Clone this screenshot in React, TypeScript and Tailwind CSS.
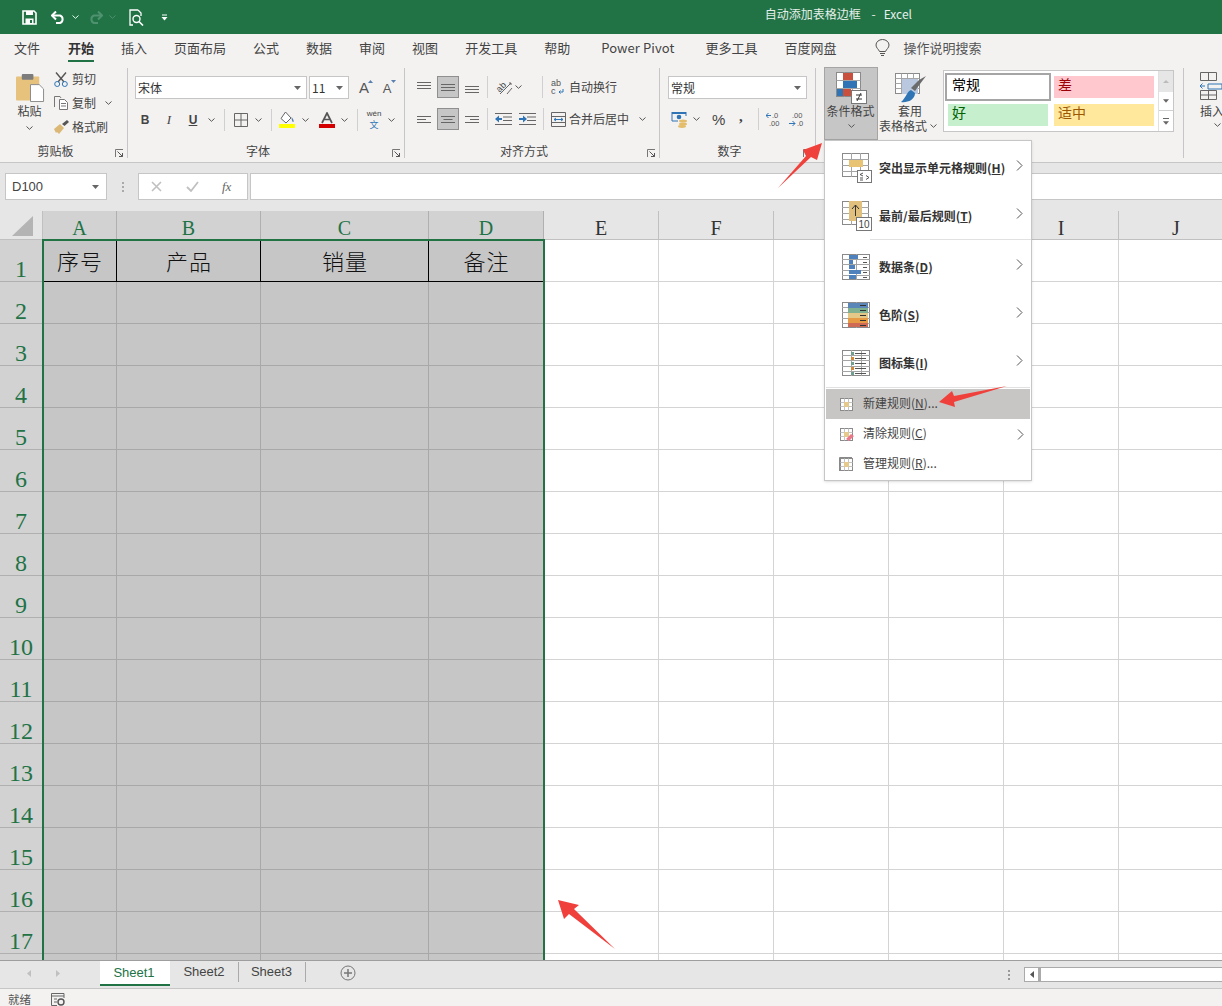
import React from 'react';

const cjk = "font-['Noto_Sans_CJK_SC','Liberation_Sans',sans-serif]";

const columns = [
  { name: 'A', width: 'w-[74px]', selected: true, title: '序号' },
  { name: 'B', width: 'w-[144px]', selected: true, title: '产品' },
  { name: 'C', width: 'w-[168px]', selected: true, title: '销量' },
  { name: 'D', width: 'w-[115px]', selected: true, title: '备注' },
  { name: 'E', width: 'w-[115px]', selected: false, title: '' },
  { name: 'F', width: 'w-[115px]', selected: false, title: '' },
  { name: 'G', width: 'w-[115px]', selected: false, title: '' },
  { name: 'H', width: 'w-[115px]', selected: false, title: '' },
  { name: 'I', width: 'w-[115px]', selected: false, title: '' },
  { name: 'J', width: 'w-[115px]', selected: false, title: '' },
];

const rows = Array.from({ length: 18 }, (_, i) => i + 1);

const tabs = ['文件', '开始', '插入', '页面布局', '公式', '数据', '审阅', '视图', '开发工具', '帮助'];

function Chev({ className = '', color = '#555' }: { className?: string; color?: string }) {
  return (
    <svg width="7" height="4" viewBox="0 0 7 4" className={`shrink-0 ${className}`}>
      <path d="M0.5 0.5 L3.5 3.3 L6.5 0.5" fill="none" stroke={color} strokeWidth="1" />
    </svg>
  );
}

function Tri({ className = '' }: { className?: string }) {
  return (
    <svg width="7" height="4" viewBox="0 0 7 4" className={`shrink-0 ${className}`}>
      <path d="M0 0 H7 L3.5 4 Z" fill="#666" />
    </svg>
  );
}

function Sep({ className = '' }: { className?: string }) {
  return <div className={`w-px h-[22px] bg-[#d0d0d0] shrink-0 ${className}`} />;
}

function Launcher() {
  return (
    <svg width="9" height="9" viewBox="0 0 9 9" className="shrink-0 mr-[3px] mt-[6px]">
      <path d="M0.5 8 V0.5 H8" fill="none" stroke="#777" />
      <path d="M2.5 2.5 L7.5 7.5 M7.5 4 V7.5 H4" fill="none" stroke="#555" />
    </svg>
  );
}

function Group({ width, label, launcher, children }: { width: string; label: string; launcher?: boolean; children: React.ReactNode }) {
  return (
    <div className={`${width} h-[90px] shrink-0 flex flex-col border-r border-[#c6c6c6]`}>
      <div className="h-[75px] shrink-0">{children}</div>
      <div className="flex items-center h-[15px]">
        <span className="flex-1 pr-[4px] text-center text-[12px] leading-[15px] text-[#444]">{label}</span>
        {launcher ? <Launcher /> : <span className="w-[12px]" />}
      </div>
    </div>
  );
}

function Lines({ pos, align }: { pos: 'top' | 'mid' | 'bottom'; align: 'left' | 'center' | 'right' | 'full' }) {
  const y = pos === 'top' ? [2, 5, 8] : pos === 'mid' ? [4, 7, 10] : [6, 9, 12];
  const seg = (i: number) => {
    if (align === 'full') return 'M0 ' + (y[i] + 0.5) + ' H14';
    const w = i === 1 ? 9 : 14;
    if (align === 'left') return `M0 ${y[i] + 0.5} H${w}`;
    if (align === 'right') return `M${14 - w} ${y[i] + 0.5} H14`;
    return `M${(14 - w) / 2} ${y[i] + 0.5} H${14 - (14 - w) / 2}`;
  };
  return (
    <svg width="14" height="14" viewBox="0 0 14 14">
      <path d={seg(0) + seg(1) + seg(2)} stroke="#666" fill="none" />
    </svg>
  );
}

function AlignBtn({ active, children }: { active?: boolean; children: React.ReactNode }) {
  return (
    <div className={`w-[22px] h-[22px] flex items-center justify-center shrink-0 ${active ? 'bg-[#c6c6c6] border border-[#8f8f8f]' : ''}`}>
      {children}
    </div>
  );
}

function Indent({ flip }: { flip?: boolean }) {
  return (
    <svg width="17" height="14" viewBox="0 0 17 14" className="shrink-0">
      <path d="M0 1.5 H17 M8 5 H17 M8 8.5 H17 M0 12.5 H17" stroke="#666" />
      {flip ? (
        <path d="M0 6 H4 V3.5 L8 7 L4 10.5 V8 H0 Z" fill="#2f75b5" />
      ) : (
        <path d="M7 6 H4 V3.5 L0 7 L4 10.5 V8 H7 Z" fill="#2f75b5" />
      )}
    </svg>
  );
}

function GridBase({ w = 28, h = 26, cols = 3, rowsN = 5 }: { w?: number; h?: number; cols?: number; rowsN?: number }) {
  const parts: React.ReactNode[] = [];
  for (let i = 1; i < cols; i++) {
    const x = Math.round((w * i) / cols) + 0.5;
    parts.push(<path key={`c${i}`} d={`M${x} 0 V${h}`} stroke="#a5a5a5" />);
  }
  for (let i = 1; i < rowsN; i++) {
    const y = Math.round((h * i) / rowsN) + 0.5;
    parts.push(<path key={`r${i}`} d={`M0 ${y} H${w}`} stroke="#a5a5a5" />);
  }
  return (
    <>
      <rect x="0.5" y="0.5" width={w - 1} height={h - 1} fill="#fff" stroke="#8a8a8a" />
      {parts}
    </>
  );
}

function HighlightIcon() {
  return (
    <svg width="30" height="30" viewBox="0 0 30 30" className="shrink-0">
      <GridBase w={27} h={24} rowsN={4} />
      <rect x="7" y="7" width="14" height="7" fill="#e8c374" />
      <rect x="15.5" y="17.5" width="14" height="12" fill="#fff" stroke="#777" />
      <path d="M21 20 L18 21.5 L21 23 M18 25 H21 M18 27 H21 M24 22.5 L27 24.5 L24 26.5" stroke="#444" fill="none" strokeWidth="0.9" />
    </svg>
  );
}

function TopIcon() {
  return (
    <svg width="30" height="30" viewBox="0 0 30 30" className="shrink-0">
      <GridBase w={27} h={24} rowsN={4} />
      <rect x="7" y="0" width="13" height="20" fill="#e0c07c" />
      <path d="M13.5 15 V4 M10 8 L13.5 4 L17 8" fill="none" stroke="#333" />
      <rect x="14.5" y="16.5" width="15" height="13" fill="#fff" stroke="#777" />
      <text x="22" y="27" textAnchor="middle" fontSize="10" fill="#444" fontFamily="Liberation Sans">10</text>
    </svg>
  );
}

function DataBarIcon() {
  return (
    <svg width="28" height="26" viewBox="0 0 28 26" className="shrink-0">
      <GridBase cols={2} />
      <rect x="7" y="1" width="9" height="4" fill="#4f81bd" />
      <rect x="7" y="6" width="4" height="4" fill="#4f81bd" />
      <rect x="7" y="11" width="6" height="4" fill="#4f81bd" />
      <rect x="7" y="16" width="12" height="4" fill="#4f81bd" />
      <rect x="7" y="21" width="7" height="4" fill="#4f81bd" />
      <path d="M21 3.5 H25 M21 8.5 H25 M21 13.5 H25 M21 18.5 H25 M21 23.5 H25" stroke="#555" />
    </svg>
  );
}

function ScaleIcon() {
  return (
    <svg width="28" height="26" viewBox="0 0 28 26" className="shrink-0">
      <GridBase cols={2} />
      <rect x="6" y="1" width="20" height="5" fill="#5b87b8" />
      <rect x="6" y="6" width="20" height="5" fill="#7fb08f" />
      <rect x="6" y="11" width="20" height="5" fill="#e3c888" />
      <rect x="6" y="16" width="20" height="5" fill="#e59a43" />
      <rect x="6" y="21" width="20" height="4" fill="#cf6a55" />
      <path d="M18 3.5 H24 M18 8.5 H24 M18 13.5 H24 M18 18.5 H24 M18 23.5 H24" stroke="#333" />
    </svg>
  );
}

function IconSetIcon() {
  return (
    <svg width="28" height="26" viewBox="0 0 28 26" className="shrink-0">
      <GridBase cols={3} />
      <path d="M13 3.5 H24 M13 8.5 H24 M13 13.5 H24 M13 18.5 H24 M13 23.5 H24" stroke="#555" />
      <rect x="9" y="2" width="3" height="3" fill="#6f9f8f" />
      <rect x="9" y="7" width="3" height="3" fill="#d08a3a" />
      <rect x="9" y="12" width="3" height="3" fill="#6f9f8f" />
      <rect x="9" y="17" width="3" height="3" fill="#d08a3a" />
      <rect x="9" y="22" width="3" height="3" fill="#6f9f8f" />
    </svg>
  );
}

function SmallRuleIcon({ kind }: { kind: 'new' | 'clear' | 'manage' }) {
  return (
    <svg width="16" height="16" viewBox="0 0 16 16" className="shrink-0">
      {kind === 'manage' && <path d="M1.5 15 V1.5 H14" fill="none" stroke="#888" />}
      <rect x="2.5" y="2.5" width="12" height="12" fill="#fff" stroke="#8a8a8a" />
      <path d="M6.5 2.5 V14.5 M10.5 2.5 V14.5 M2.5 6.5 H14.5 M2.5 10.5 H14.5" stroke="#c4c4c4" />
      <rect x="6" y="6" width="5" height="5" fill="#e6c98c" />
      {kind === 'clear' && <path d="M8 13 L13 8 L16 10 L11 15 Z" fill="#e9788a" />}
    </svg>
  );
}

function ArrowRight({ className = '' }: { className?: string }) {
  return (
    <svg width="7" height="11" viewBox="0 0 7 11" className={`shrink-0 ${className}`}>
      <path d="M1 0.5 L6 5.5 L1 10.5" fill="none" stroke="#555" />
    </svg>
  );
}

function MenuItem({ icon, label, letter, arrow = true }: { icon: React.ReactNode; label: string; letter: string; arrow?: boolean }) {
  return (
    <div className="h-[48px] flex items-center pl-[17px] pr-[8px]">
      <div className="w-[30px] shrink-0 flex">{icon}</div>
      <span className="ml-[7px] text-[12px] font-bold text-[#333] whitespace-nowrap">
        {label}(<span className="underline">{letter}</span>)
      </span>
      {arrow && <ArrowRight className="ml-auto -mt-[6px]" />}
    </div>
  );
}

function SmallItem({ kind, label, letter, dots, arrow, active }: { kind: 'new' | 'clear' | 'manage'; label: string; letter: string; dots?: boolean; arrow?: boolean; active?: boolean }) {
  return (
    <div className={`h-[30px] mx-px flex items-center pl-[12px] pr-[6px] ${active ? 'bg-[#c8c6c4]' : ''}`}>
      <SmallRuleIcon kind={kind} />
      <span className="ml-[9px] -mt-[2px] text-[12px] text-[#444] whitespace-nowrap">
        {label}(<span className="underline">{letter}</span>){dots ? '...' : ''}
      </span>
      {arrow && <ArrowRight className="ml-auto" />}
    </div>
  );
}

function TitleBar() {
  return (
    <div className="h-[34px] shrink-0 bg-[#217346] flex items-center justify-between">
      <div className="flex items-center pl-[22px]">
        <svg width="15" height="15" viewBox="0 0 15 15" className="shrink-0">
          <path d="M1 1 H12 L14 3 V14 H1 Z" fill="none" stroke="#fff" strokeWidth="1.6" />
          <rect x="4" y="1" width="7" height="4" fill="#fff" />
          <rect x="3.5" y="8.5" width="8" height="5.5" fill="#fff" />
          <rect x="8" y="10" width="2" height="3" fill="#217346" />
        </svg>
        <svg width="15" height="13" viewBox="0 0 15 13" className="ml-[14px] shrink-0">
          <path d="M1 4.5 H9 A4 4 0 0 1 9 12 H5" fill="none" stroke="#fff" strokeWidth="2" />
          <path d="M5 0.5 L1 4.5 L5 8.5" fill="none" stroke="#fff" strokeWidth="2" />
        </svg>
        <Chev className="ml-[6px]" color="#dfe" />
        <svg width="15" height="13" viewBox="0 0 15 13" className="ml-[9px] shrink-0">
          <path d="M14 4.5 H6 A4 4 0 0 0 6 12 H10" fill="none" stroke="#4f9270" strokeWidth="2" />
          <path d="M10 0.5 L14 4.5 L10 8.5" fill="none" stroke="#4f9270" strokeWidth="2" />
        </svg>
        <Chev className="ml-[6px]" color="#4f9270" />
        <svg width="15" height="17" viewBox="0 0 15 17" className="ml-[13px] shrink-0">
          <path d="M9 1 H1 V16 H4 M9 1 L12 4 V7" fill="none" stroke="#fff" strokeWidth="1.3" />
          <circle cx="7.5" cy="10" r="3.5" fill="none" stroke="#fff" strokeWidth="1.4" />
          <path d="M10 12.5 L14 16.5" stroke="#fff" strokeWidth="1.6" />
        </svg>
        <svg width="7" height="7" viewBox="0 0 7 7" className="ml-[17px] shrink-0">
          <path d="M1 1 H6" stroke="#fff" />
          <path d="M0.5 3 H6.5 L3.5 6.5 Z" fill="#fff" />
        </svg>
      </div>
      <div className="mr-[310px] mb-[6px] text-[12px] text-[#e6efe9] whitespace-pre">自动添加表格边框    -   Excel</div>
    </div>
  );
}

function TabBar() {
  return (
    <div className="h-[28px] shrink-0 flex items-center pl-[14px] text-[13px] text-[#444] bg-[#f3f2f1] whitespace-nowrap">
      <div className="flex gap-[27px]">
        {tabs.map((tab) => (
          <div key={tab} className={`relative h-[28px] leading-[28px] ${tab === '开始' ? 'ml-px font-bold text-[#333]' : ''}`}>
            {tab}
            {tab === '开始' && <div className="absolute left-0 right-0 bottom-0 h-[2px] bg-[#217346]" />}
          </div>
        ))}
      </div>
      <div className="ml-[31px] tracking-[0.1px]">Power Pivot</div>
      <div className="ml-[31px]">更多工具</div>
      <div className="ml-[27px]">百度网盘</div>
      <svg width="15" height="18" viewBox="0 0 15 18" className="ml-[38px] shrink-0">
        <path d="M4.5 12.5 C3.5 10 1 9 1 6 A6.5 5.5 0 0 1 14 6 C14 9 11.5 10 10.5 12.5 Z" fill="none" stroke="#555" />
        <path d="M5 14.5 H10 M6 16.5 H9" stroke="#555" />
      </svg>
      <div className="ml-[14px] text-[#555]">操作说明搜索</div>
    </div>
  );
}

function ClipboardGroup() {
  return (
    <Group width="w-[128px]" label="剪贴板" launcher>
      <div className="flex h-full">
        <div className="w-[50px] pl-[9px] flex flex-col items-center pt-[4px] shrink-0">
          <svg width="29" height="31" viewBox="0 0 30 31" className="shrink-0 ml-[2px]">
            <rect x="0" y="4" width="24" height="25" rx="1" fill="#e6c27d" />
            <rect x="6" y="1.5" width="12" height="6" rx="1" fill="#7c7c7c" />
            <path d="M15 12.5 H24 L28.5 17 V30 H15 Z" fill="#fff" stroke="#8a8a8a" />
          </svg>
          <span className="text-[12px] leading-[16px] text-[#444]">粘贴</span>
          <Chev className="mt-[7px]" />
        </div>
        <div className="pl-[4px] flex flex-col text-[12px] text-[#444]">
          <div className="flex items-center h-[24px] mt-[-1px]">
            <svg width="14" height="15" viewBox="0 0 14 15" className="shrink-0">
              <path d="M2 0.5 L10 10 M12 0.5 L4 10" stroke="#555" strokeWidth="1.4" />
              <circle cx="3.2" cy="12" r="2.5" fill="none" stroke="#2f75b5" />
              <circle cx="10.8" cy="12" r="2.5" fill="none" stroke="#2f75b5" />
            </svg>
            <span className="ml-[4px]">剪切</span>
          </div>
          <div className="flex items-center h-[24px]">
            <svg width="14" height="14" viewBox="0 0 14 14" className="shrink-0">
              <path d="M0.5 11 V0.5 H6 L7 2" fill="none" stroke="#777" />
              <path d="M5.5 3.5 H10.5 L13.5 6.5 V13.5 H5.5 Z M7 7.5 H12 M7 10 H12" fill="#fff" stroke="#777" />
            </svg>
            <span className="ml-[4px]">复制</span>
            <Chev className="ml-[9px]" />
          </div>
          <div className="flex items-center h-[24px]">
            <svg width="15" height="14" viewBox="0 0 15 14" className="shrink-0">
              <path d="M0 9 L6 4 L10 8 L5 14 L3 12 L2 13 Z" fill="#dcb877" />
              <path d="M8 4 L13 0 L15 2 L10.5 6 Z" fill="#555" />
            </svg>
            <span className="ml-[3px]">格式刷</span>
          </div>
        </div>
      </div>
    </Group>
  );
}

function FontGroup() {
  return (
    <Group width="w-[277px]" label="字体" launcher>
      <div className="flex items-center h-[23px] mt-[8px] pl-[7px] text-[12px] text-[#333]">
        <div className="w-[172px] h-[23px] bg-white border border-[#c6c6c6] flex items-center pl-[2px] pr-[5px]">
          <span className="flex-1">宋体</span>
          <Tri />
        </div>
        <div className="w-[40px] h-[23px] ml-[2px] bg-white border border-[#c6c6c6] flex items-center pl-[2px] pr-[5px]">
          <span className="flex-1">11</span>
          <Tri />
        </div>
        <div className="relative ml-[8px] w-[14px] text-center text-[15px] leading-none text-[#555] font-['Liberation_Sans',sans-serif]">
          A
          <svg width="5" height="3" viewBox="0 0 5 3" className="absolute -right-[2px] top-0">
            <path d="M0 3 L2.5 0 L5 3 Z" fill="#5b7fb0" />
          </svg>
        </div>
        <div className="relative ml-[10px] w-[12px] text-center text-[13px] leading-none text-[#555] mt-[2px] font-['Liberation_Sans',sans-serif]">
          A
          <svg width="5" height="3" viewBox="0 0 5 3" className="absolute -right-[3px] -top-[2px]">
            <path d="M0 0 H5 L2.5 3 Z" fill="#5b7fb0" />
          </svg>
        </div>
      </div>
      <div className="flex items-center h-[22px] mt-[10px] text-[12px] text-[#444] font-['Liberation_Sans',sans-serif]">
        <span className="w-[16px] ml-[9px] text-center font-bold">B</span>
        <span className="w-[16px] ml-[8px] text-center italic font-['Liberation_Serif',serif] text-[13px]">I</span>
        <span className="w-[16px] ml-[8px] text-center font-bold underline">U</span>
        <Chev className="ml-[7px]" />
        <Sep className="ml-[9px]" />
        <svg width="14" height="14" viewBox="0 0 14 14" className="ml-[9px] shrink-0">
          <path d="M0.5 0.5 H13.5 V13.5 H0.5 Z M7 0.5 V13.5 M0.5 7 H13.5" fill="none" stroke="#666" />
        </svg>
        <Chev className="ml-[7px]" />
        <Sep className="ml-[9px]" />
        <svg width="17" height="18" viewBox="0 0 17 18" className="ml-[7px] shrink-0">
          <path d="M6.5 1 L12 7 L7 12 L2 7.5 Z" fill="#fff" stroke="#666" />
          <path d="M12.5 6 C14 8 15 9 14.5 11 C13.5 11.5 12.5 9 12.5 6 Z" fill="#5b7fb0" />
          <rect x="0" y="13" width="16" height="4" fill="#ffff00" />
        </svg>
        <Chev className="ml-[6px]" />
        <svg width="16" height="16" viewBox="0 0 16 16" className="ml-[10px] shrink-0">
          <path d="M3 11 L8 1 L13 11 M5 7.5 H11" fill="none" stroke="#555" strokeWidth="1.7" />
          <rect x="0" y="12" width="16" height="4" fill="#d40000" />
        </svg>
        <Chev className="ml-[6px]" />
        <Sep className="ml-[9px]" />
        <div className="ml-[8px] w-[16px] flex flex-col items-center gap-[2px] -mt-[2px]">
          <span className="text-[8px] leading-[8px]">wén</span>
          <span className={`text-[9px] leading-[9px] text-[#2f75b5] ${cjk}`}>文</span>
        </div>
        <Chev className="ml-[6px]" />
      </div>
    </Group>
  );
}

function AlignGroup() {
  return (
    <Group width="w-[255px]" label="对齐方式" launcher>
      <div className="flex items-center h-[22px] mt-[8px] pl-[8px] text-[12px] text-[#444]">
        <div className="flex gap-[2px]">
          <AlignBtn><Lines pos="top" align="full" /></AlignBtn>
          <AlignBtn active><Lines pos="mid" align="full" /></AlignBtn>
          <AlignBtn><Lines pos="bottom" align="full" /></AlignBtn>
        </div>
        <Sep className="ml-[4px]" />
        <svg width="18" height="16" viewBox="0 0 18 16" className="ml-[7px] shrink-0 overflow-visible">
          <text x="1" y="11" fontSize="9" fill="#444" transform="rotate(-45 6 8)" fontFamily="Liberation Sans">ab</text>
          <path d="M5 15 L16 4 M12 15 L17 9 M14 4 H16 V6" stroke="#666" fill="none" />
        </svg>
        <Chev className="ml-[2px]" />
        <Sep className="ml-[20px]" />
        <svg width="14" height="16" viewBox="0 0 14 16" className="ml-[8px] shrink-0">
          <text x="0" y="7" fontSize="9" fill="#555" fontFamily="Liberation Sans">ab</text>
          <text x="0" y="15" fontSize="9" fill="#555" fontFamily="Liberation Sans">c</text>
          <path d="M12 10 V13 H8 M9.5 11.5 L8 13 L9.5 14.5" fill="none" stroke="#2f75b5" />
        </svg>
        <span className="ml-[4px] whitespace-nowrap">自动换行</span>
      </div>
      <div className="flex items-center h-[22px] mt-[10px] pl-[8px] text-[12px] text-[#444]">
        <div className="flex gap-[2px]">
          <AlignBtn><Lines pos="mid" align="left" /></AlignBtn>
          <AlignBtn active><Lines pos="mid" align="center" /></AlignBtn>
          <AlignBtn><Lines pos="mid" align="right" /></AlignBtn>
        </div>
        <Sep className="ml-[4px]" />
        <div className="ml-[7px] shrink-0 flex"><Indent /></div>
        <div className="ml-[7px] shrink-0 flex"><Indent flip /></div>
        <Sep className="ml-[7px]" />
        <svg width="15" height="15" viewBox="0 0 15 15" className="ml-[7px] shrink-0">
          <path d="M0.5 0.5 H14.5 V14.5 H0.5 Z M0.5 4.5 H14.5 M0.5 10.5 H14.5" fill="none" stroke="#666" />
          <path d="M3 7.5 H12 M3 7.5 L5 6 M3 7.5 L5 9 M12 7.5 L10 6 M12 7.5 L10 9" fill="none" stroke="#2f75b5" />
        </svg>
        <span className="ml-[3px] whitespace-nowrap">合并后居中</span>
        <Chev className="ml-[10px]" />
      </div>
    </Group>
  );
}

function NumberGroup() {
  return (
    <Group width="w-[156px]" label="数字" launcher>
      <div className="w-[139px] h-[23px] mt-[8px] ml-[8px] bg-white border border-[#c6c6c6] flex items-center pl-[2px] pr-[5px] text-[12px] text-[#333]">
        <span className="flex-1">常规</span>
        <Tri />
      </div>
      <div className="flex items-center h-[22px] mt-[9px] text-[#444]">
        <svg width="17" height="17" viewBox="0 0 17 17" className="ml-[11px] shrink-0">
          <path d="M1 1 H15 V3 H1 Z" fill="#2f75b5" />
          <path d="M1 1 V10 H7 M15 1 V5" fill="none" stroke="#2f75b5" />
          <circle cx="8" cy="6" r="2.3" fill="#2f75b5" />
          <ellipse cx="12" cy="10" rx="4" ry="1.5" fill="#e3bd6c" />
          <ellipse cx="12" cy="13" rx="4" ry="1.5" fill="#e3bd6c" />
          <ellipse cx="11" cy="15.5" rx="4" ry="1.4" fill="#e3bd6c" />
        </svg>
        <Chev className="ml-[5px]" />
        <span className="ml-[12px] w-[14px] text-[15px] leading-none font-['Liberation_Sans',sans-serif]">%</span>
        <span className="ml-[13px] w-[6px] text-[15px] leading-none font-bold font-['Liberation_Serif',serif] -mt-[5px]">,</span>
        <Sep className="ml-[13px]" />
        <svg width="16" height="16" viewBox="0 0 16 16" className="ml-[7px] shrink-0">
          <text x="6" y="7" fontSize="7.5" fill="#555" fontFamily="Liberation Sans">.0</text>
          <text x="3" y="15" fontSize="7.5" fill="#555" fontFamily="Liberation Sans">.00</text>
          <path d="M0 4.5 H5 M2.5 2 L0 4.5 L2.5 7" fill="none" stroke="#2f75b5" />
        </svg>
        <svg width="16" height="16" viewBox="0 0 16 16" className="ml-[7px] shrink-0">
          <text x="3" y="7" fontSize="7.5" fill="#555" fontFamily="Liberation Sans">.00</text>
          <text x="8" y="15" fontSize="7.5" fill="#555" fontFamily="Liberation Sans">.0</text>
          <path d="M0 12.5 H6 M3.5 10 L6 12.5 L3.5 15" fill="none" stroke="#2f75b5" />
        </svg>
      </div>
    </Group>
  );
}

function StylesGroup() {
  return (
    <Group width="w-[368px]" label="样式">
      <div className="flex items-start pl-[8px] text-[12px] text-[#444]">
        <div className="w-[54px] h-[73px] -mt-[1px] bg-[#c6c6c6] border border-[#a5a5a5] flex flex-col items-center pt-[4px] shrink-0">
          <svg width="31" height="33" viewBox="0 0 31 33" className="shrink-0">
            <rect x="0.5" y="0.5" width="24" height="24" fill="#fff" stroke="#8a8a8a" />
            <path d="M8.5 0.5 V24.5 M16.5 0.5 V24.5 M0.5 8.5 H24.5 M0.5 16.5 H24.5" stroke="#a5a5a5" />
            <rect x="7" y="1" width="10" height="7" fill="#c9503c" />
            <rect x="7" y="9" width="14" height="7" fill="#2f75b5" />
            <rect x="7" y="17" width="8" height="7" fill="#c9503c" />
            <rect x="1" y="17" width="6" height="7" fill="#2f75b5" />
            <rect x="15.5" y="18.5" width="15" height="13" fill="#fff" stroke="#777" />
            <path d="M20 23 H26 M20 27 H26 M25 21 L21 29" stroke="#333" fill="none" />
          </svg>
          <span className="leading-[15px] -mt-[2px] -ml-px whitespace-nowrap">条件格式</span>
          <Chev className="mt-[6px]" />
        </div>
        <div className="w-[64px] flex flex-col items-center pt-[5px] shrink-0">
          <svg width="31" height="31" viewBox="0 0 31 31" className="shrink-0">
            <rect x="0.5" y="0.5" width="24" height="20" fill="#fff" stroke="#8a8a8a" />
            <path d="M6.5 0.5 V20.5 M12.5 0.5 V20.5 M18.5 0.5 V20.5 M0.5 5.5 H24.5 M0.5 10.5 H24.5 M0.5 15.5 H24.5" stroke="#a5a5a5" />
            <rect x="7" y="6" width="16" height="15" fill="#b9c8de" />
            <path d="M31 3 L25 11 L20 18 L16 15 L24 7 Z" fill="#6b6b6b" />
            <path d="M16 17 C12 18 11 25 6 29 C12 30 20 27 20 20 Z" fill="#2f75b5" />
          </svg>
          <span className="leading-[15px] -mt-[1px]">套用</span>
          <span className="leading-[15px] flex items-center whitespace-nowrap -ml-[4px]">
            表格格式
            <Chev className="ml-[3px]" />
          </span>
        </div>
        <div className="ml-[1px] mt-[2px] w-[231px] h-[62px] bg-white border border-[#c6c6c6] flex shrink-0">
          <div className="w-[214px] grid grid-cols-[100px_100px] gap-x-[6px] gap-y-[6px] pl-[4px] pt-[5px] content-start text-[14px] leading-[17px]">
            <div className="h-[22px] pl-[4px] bg-white text-black outline-2 outline-offset-1 outline-[#a5a5a5]">常规</div>
            <div className="h-[22px] pl-[4px] bg-[#ffc7ce] text-[#9c0006]">差</div>
            <div className="h-[22px] pl-[4px] bg-[#c6efce] text-[#006100]">好</div>
            <div className="h-[22px] pl-[4px] bg-[#ffe79b] text-[#9c5700]">适中</div>
          </div>
          <div className="w-[15px] flex flex-col border-l border-[#e0e0e0]">
            <div className="h-[21px] bg-[#e6e6e6] flex items-center justify-center">
              <svg width="6" height="3" viewBox="0 0 6 3"><path d="M0 3 L3 0 L6 3 Z" fill="#bbb" /></svg>
            </div>
            <div className="h-[19px] border-b border-[#d0d0d0] flex items-center justify-center">
              <Tri className="w-[6px]" />
            </div>
            <div className="flex-1 flex flex-col items-center justify-center gap-[2px]">
              <div className="w-[6px] h-px bg-[#666]" />
              <Tri className="w-[6px]" />
            </div>
          </div>
        </div>
      </div>
    </Group>
  );
}

function CellsGroup() {
  return (
    <div className="flex-1 min-w-0 pl-[16px] text-[12px] text-[#444] overflow-hidden">
      <svg width="24" height="28" viewBox="0 0 24 28" className="mt-[4px] block">
        <path d="M0.5 0.5 H16.5 V8.5 H0.5 Z M8.5 0.5 V8.5 M0.5 18.5 H16.5 V27.5 H0.5 Z M8.5 18.5 V27.5 M0.5 23 H16.5" fill="none" stroke="#666" />
        <path d="M8 12 H22 V17 H8 Z" fill="none" stroke="#2f75b5" />
        <path d="M0 14 H5 M2.5 11.5 L0 14 L2.5 16.5" fill="none" stroke="#2f75b5" />
      </svg>
      <div className="leading-[15px] mt-[3px] whitespace-nowrap">插入</div>
      <Chev className="ml-[14px] mt-[5px]" />
    </div>
  );
}

function FormulaBar() {
  return (
    <div className="h-[49px] shrink-0 bg-[#e6e6e6] border-t border-[#c6c6c6] pt-[10px] flex items-start">
      <div className="w-[102px] h-[27px] ml-[5px] bg-white border border-[#c6c6c6] flex items-center pl-[6px] pr-[7px] text-[13px] text-[#444] font-['Liberation_Sans',sans-serif]">
        <span className="flex-1">D100</span>
        <Tri />
      </div>
      <div className="w-[31px] h-[27px] flex flex-col items-center justify-center gap-[2px]">
        <div className="w-[2px] h-[2px] bg-[#aaa]" />
        <div className="w-[2px] h-[2px] bg-[#aaa]" />
        <div className="w-[2px] h-[2px] bg-[#aaa]" />
      </div>
      <div className="w-[110px] h-[27px] bg-white border border-[#c6c6c6] flex items-center shrink-0">
        <svg width="11" height="11" viewBox="0 0 11 11" className="ml-[12px]">
          <path d="M1 1 L10 10 M10 1 L1 10" stroke="#c0c0c0" strokeWidth="1.6" />
        </svg>
        <svg width="13" height="11" viewBox="0 0 13 11" className="ml-[24px]">
          <path d="M1 6 L5 10 L12 1" fill="none" stroke="#c0c0c0" strokeWidth="1.8" />
        </svg>
        <span className="ml-[23px] text-[13px] italic text-[#666] font-['Liberation_Serif',serif]">fx</span>
      </div>
      <div className="flex-1 h-[27px] ml-[2px] bg-white border-y border-l border-[#c6c6c6]" />
    </div>
  );
}

function Sheet() {
  return (
    <div className="relative flex-1 min-h-0 overflow-hidden bg-white">
      <div className="flex h-[29px]">
        <div className="w-[43px] shrink-0 bg-[#e6e6e6] border-r border-b border-[#c0c0c0] flex items-center justify-center">
          <svg width="24" height="22" viewBox="0 0 24 22" className="ml-[4px] mt-[2px]">
            <path d="M1 21 H22 V1 Z" fill="#b4b4b4" />
          </svg>
        </div>
        {columns.map((col) => (
          <div
            key={col.name}
            className={`${col.width} shrink-0 border-r border-b flex items-end justify-center text-[20px] leading-[22px] font-['Liberation_Serif',serif] ${
              col.selected ? 'bg-[#d2d2d2] border-[#b0b0b0] text-[#217346]' : 'bg-[#e6e6e6] border-[#c0c0c0] text-[#333]'
            }`}
          >
            {col.name}
          </div>
        ))}
      </div>
      {rows.map((row) => (
        <div key={row} className="flex h-[42px]">
          <div className="w-[43px] shrink-0 bg-[#d2d2d2] border-r border-b border-[#b0b0b0] flex items-end justify-center text-[24px] leading-[24px] text-[#217346] font-['Liberation_Serif',serif]">
            {row < 18 ? row : ''}
          </div>
          {columns.map((col) => (
            <div
              key={col.name}
              className={`${col.width} shrink-0 border-r border-b flex items-center justify-center pb-[1px] pl-[1px] text-[22px] tracking-[1px] text-[#111] font-light ${
                col.selected
                  ? row === 1
                    ? 'bg-[#c6c6c6] border-black'
                    : 'bg-[#c6c6c6] border-[#a8a8a8]'
                  : 'bg-white border-[#d4d4d4]'
              }`}
            >
              {row === 1 ? col.title : ''}
            </div>
          ))}
        </div>
      ))}
      <div className="absolute left-[42px] top-[28px] w-[503px] h-[800px] border-2 border-[#217346]" />
    </div>
  );
}

function SheetTabs() {
  return (
    <div className="h-[28px] shrink-0 bg-[#e6e6e6] border-t border-[#9e9e9e] flex items-start font-['Liberation_Sans',sans-serif] text-[13px] text-[#444]">
      <svg width="4" height="7" viewBox="0 0 4 7" className="ml-[27px] mt-[9px] shrink-0">
        <path d="M4 0 V7 L0 3.5 Z" fill="#c0c0c0" />
      </svg>
      <svg width="4" height="7" viewBox="0 0 4 7" className="ml-[25px] mt-[9px] shrink-0">
        <path d="M0 0 V7 L4 3.5 Z" fill="#c0c0c0" />
      </svg>
      <div className="ml-[40px] w-[70px] h-[25px] pr-[2px] bg-white border-b-2 border-[#217346] text-[#217346] text-center leading-[23px] shrink-0">Sheet1</div>
      <div className="w-[69px] h-[20px] mt-[1px] border-r border-[#aaa] text-center leading-[20px] shrink-0">Sheet2</div>
      <div className="w-[67px] h-[20px] mt-[1px] pr-[1px] border-r border-[#aaa] text-center leading-[20px] shrink-0">Sheet3</div>
      <svg width="16" height="16" viewBox="0 0 16 16" className="ml-[34px] mt-[4px] shrink-0">
        <circle cx="8" cy="8" r="7" fill="none" stroke="#777" />
        <path d="M8 4 V12 M4 8 H12" stroke="#777" strokeWidth="1.5" />
      </svg>
      <div className="ml-[652px] mt-[9px] flex flex-col gap-[2px] shrink-0">
        <div className="w-[2px] h-[2px] bg-[#999]" />
        <div className="w-[2px] h-[2px] bg-[#999]" />
        <div className="w-[2px] h-[2px] bg-[#999]" />
      </div>
      <div className="ml-[14px] mt-[6px] w-[15px] h-[15px] bg-white border border-[#aaa] flex items-center justify-center shrink-0">
        <svg width="4" height="7" viewBox="0 0 4 7">
          <path d="M4 0 V7 L0 3.5 Z" fill="#555" />
        </svg>
      </div>
      <div className="mt-[6px] flex-1 h-[15px] bg-white border-y border-l-2 border-[#aaa]" />
    </div>
  );
}

function StatusBar() {
  return (
    <div className="h-[18px] shrink-0 bg-[#f3f2f1] border-t border-[#c6c6c6] flex items-center pl-[8px] pt-[3px] text-[11.5px] leading-[12px] text-[#555] overflow-hidden">
      <span>就绪</span>
      <svg width="14" height="13" viewBox="0 0 14 13" className="ml-[20px] shrink-0">
        <path d="M0.5 0.5 H13 M0.5 0.5 V12.5 H6 M13 0.5 V5 M0.5 3 H13 M3 6 H6 M3 9 H6" fill="none" stroke="#666" />
        <circle cx="10" cy="9" r="3" fill="none" stroke="#555" strokeWidth="1.4" />
      </svg>
    </div>
  );
}

export default function App() {
  return (
    <div className={`relative w-[1222px] h-[1006px] overflow-hidden flex flex-col bg-[#f3f2f1] ${cjk}`}>
      <TitleBar />
      <TabBar />
      <div className="h-[100px] shrink-0 flex pt-[6px] bg-[#f3f2f1]">
        <ClipboardGroup />
        <FontGroup />
        <AlignGroup />
        <NumberGroup />
        <StylesGroup />
        <CellsGroup />
      </div>
      <FormulaBar />
      <Sheet />
      <SheetTabs />
      <StatusBar />

      <div className="absolute left-[824px] top-[140px] w-[208px] h-[341px] bg-white border border-[#c6c6c6] shadow-sm flex flex-col pt-[3px]">
        <MenuItem icon={<HighlightIcon />} label="突出显示单元格规则" letter="H" />
        <MenuItem icon={<TopIcon />} label="最前/最后规则" letter="T" />
        <div className="h-px bg-[#e1e1e1] ml-[45px] -mt-px" />
        <div className="h-[3px]" />
        <MenuItem icon={<DataBarIcon />} label="数据条" letter="D" />
        <MenuItem icon={<ScaleIcon />} label="色阶" letter="S" />
        <MenuItem icon={<IconSetIcon />} label="图标集" letter="I" />
        <div className="h-px bg-[#e1e1e1] mx-[1px]" />
        <div className="h-[1px]" />
        <SmallItem kind="new" label="新建规则" letter="N" dots active />
        <SmallItem kind="clear" label="清除规则" letter="C" arrow />
        <SmallItem kind="manage" label="管理规则" letter="R" dots />
      </div>

      <svg width="1222" height="1006" viewBox="0 0 1222 1006" className="absolute left-0 top-0 pointer-events-none">
        <polygon points="778,188 806,156 803,150 822,143 817,160 811,157" fill="#f0403c" />
        <polygon points="1007,386 954,396 952,391 939,402 955,407 954,402" fill="#f0403c" />
        <polygon points="615,949 574,909 579,905 558,900 564,919 569,914" fill="#f0403c" />
      </svg>
    </div>
  );
}
